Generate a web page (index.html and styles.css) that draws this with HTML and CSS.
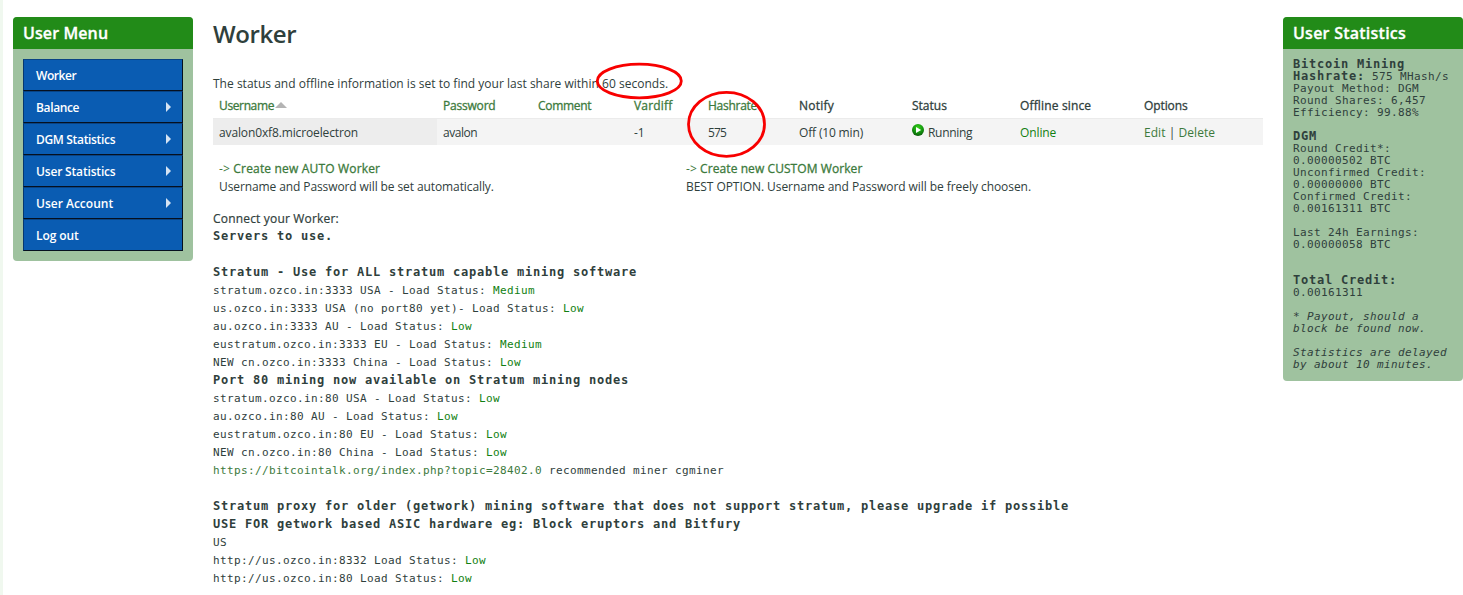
FILE: index.html
```html
<!DOCTYPE html>
<html lang="en">
<head>
<meta charset="utf-8">
<title>Worker</title>
<link rel="stylesheet" href="styles.css">
</head>
<body>
<div class="page">
  <aside class="panel">
    <h3 class="panel-title"><span class="t-menu">User Menu</span></h3>
    <ul class="menu">
      <li class="item"><span class="m1">Worker</span></li>
      <li class="item"><span class="m2">Balance</span><i class="arrow"></i></li>
      <li class="item"><span class="m3">DGM Statistics</span><i class="arrow"></i></li>
      <li class="item"><span class="m4">User Statistics</span><i class="arrow"></i></li>
      <li class="item"><span class="m5">User Account</span><i class="arrow"></i></li>
      <li class="item"><span class="m6">Log out</span></li>
    </ul>
  </aside>
  <main class="main">
    <h1 class="title"><span class="h">Worker</span></h1>
    <p class="line"><span class="s1">The status and offline information is set to find your last share within 60 seconds.</span></p>
    <div class="row head">
      <div><a class="c1">Username</a><i class="sort"></i></div>
      <div><a class="c2">Password</a></div>
      <div><a class="c3">Comment</a></div>
      <div><a class="c4">Vardiff</a></div>
      <div><a class="c5">Hashrate</a></div>
      <div><span class="c6">Notify</span></div>
      <div><span class="c7">Status</span></div>
      <div><span class="c8">Offline since</span></div>
      <div><span class="c9">Options</span></div>
    </div>
    <div class="row data">
      <div class="sorted"><span class="d1">avalon0xf8.microelectron</span></div>
      <div><span class="d2">avalon</span></div>
      <div></div>
      <div><span class="d4">-1</span></div>
      <div><span class="d5">575</span></div>
      <div><span class="d6">Off (10 min)</span></div>
      <div class="run"><svg class="play" viewBox="0 0 12 12"><defs><radialGradient id="g" cx=".5" cy=".3" r=".7"><stop offset="0" stop-color="#36d018"/><stop offset=".55" stop-color="#169b10"/><stop offset="1" stop-color="#0b5a0b"/></radialGradient></defs><circle cx="6" cy="6" r="6" fill="url(#g)"/><path d="M4 3l5.2 3L4 9z" fill="#fff"/></svg><span class="d7">Running</span></div>
      <div><span class="d8 ok">Online</span></div>
      <div><span class="d9"><a>Edit</a> | <a>Delete</a></span></div>
    </div>
    <div class="create">
      <div class="auto">
        <div><a class="e1"><span class="thin">-&gt; </span>Create new AUTO Worker</a></div>
        <div><span class="e2">Username and Password will be set automatically.</span></div>
      </div>
      <div>
        <div><a class="e3"><span class="thin">-&gt; </span>Create new CUSTOM Worker</a></div>
        <div><span class="e4">BEST OPTION. Username and Password will be freely choosen.</span></div>
      </div>
    </div>
    <div class="line"><span class="s2">Connect your Worker:</span></div>
<pre class="mono"><b>Servers to use.</b>

<b>Stratum - Use for ALL stratum capable mining software</b>
stratum.ozco.in:3333 USA - Load Status: <span class="ok">Medium</span>
us.ozco.in:3333 USA (no port80 yet)- Load Status: <span class="ok">Low</span>
au.ozco.in:3333 AU - Load Status: <span class="ok">Low</span>
eustratum.ozco.in:3333 EU - Load Status: <span class="ok">Medium</span>
NEW cn.ozco.in:3333 China - Load Status: <span class="ok">Low</span>
<b>Port 80 mining now available on Stratum mining nodes</b>
stratum.ozco.in:80 USA - Load Status: <span class="ok">Low</span>
au.ozco.in:80 AU - Load Status: <span class="ok">Low</span>
eustratum.ozco.in:80 EU - Load Status: <span class="ok">Low</span>
NEW cn.ozco.in:80 China - Load Status: <span class="ok">Low</span>
<a>https://bitcointalk.org/index.php?topic=28402.0</a> recommended miner cgminer

<b>Stratum proxy for older (getwork) mining software that does not support stratum, please upgrade if possible</b>
<b>USE FOR getwork based ASIC hardware eg: Block eruptors and Bitfury</b>
US
http://us.ozco.in:8332 Load Status: <span class="ok">Low</span>
http://us.ozco.in:80 Load Status: <span class="ok">Low</span></pre>
  </main>
  <aside class="panel">
    <h3 class="panel-title"><span class="t-stats">User Statistics</span></h3>
<pre class="mono stats"><b>Bitcoin Mining</b>
<b>Hashrate:</b> 575 MHash/s
Payout Method: DGM
Round Shares: 6,457
Efficiency: 99.88%

<b>DGM</b>
Round Credit*:
0.00000502 BTC
Unconfirmed Credit:
0.00000000 BTC
Confirmed Credit:
0.00161311 BTC

Last 24h Earnings:
0.00000058 BTC


<b>Total Credit:</b>
0.00161311

<em>* Payout, should a
block be found now.

Statistics are delayed
by about 10 minutes.</em></pre>
  </aside>
</div>
<svg class="marks" viewBox="0 0 1463 595"><ellipse cx="639.3" cy="81" rx="42" ry="16.8"/><ellipse cx="726.5" cy="124.3" rx="38" ry="32"/></svg>
</body>
</html>
```
FILE: styles.css
```css
* { box-sizing: border-box; }
body { margin: 0; height: 595px; overflow: hidden; background: #fff; color: #2f403c; border-left: 3px solid #f0f8ef; font: 12px/18px "Open Sans", "Noto Sans", sans-serif; }
a { color: #3c7a3c; }
.page { display: flex; align-items: flex-start; padding: 17px 0 0 10px; }
.panel { width: 180px; flex: none; background: #9fc29f; border-radius: 4px; overflow: hidden; }
.panel-title { margin: 0; height: 32px; padding-left: 10px; background: #228b18; color: #fff; font-size: 16px; line-height: 32px; font-weight: 600; white-space: nowrap; -webkit-text-stroke: .3px; }
.menu { list-style: none; margin: 0; padding: 10px; }
.item { display: flex; justify-content: space-between; align-items: center; height: 32px; padding: 0 11px 0 12px; background: #0a5cb2; border: 1px solid #06101f; border-top-color: #084384; border-left-color: #06386f; color: #fff; font-weight: 600; white-space: nowrap; }
.item span { padding-top: 1px; }
.arrow { border-left: 5px solid #d5e3f3; border-top: 5px solid transparent; border-bottom: 5px solid transparent; }
.main { width: 1050px; margin: 0 20px; flex: none; white-space: nowrap; }
.title { margin: 0 0 24px; font-size: 24px; line-height: 34px; font-weight: 600; }
.line { margin: 0; height: 18px; }
.row { display: grid; grid-template-columns: 224px 95px 96px 74px 91px 113px 108px 124px 125px; }
.row > div { padding-left: 6px; }
.head { height: 25px; line-height: 25px; -webkit-text-stroke: .3px; }
.data { height: 27px; line-height: 25px; background: #f4f4f4; border-top: 1px solid #ebebeb; }
.data > div { padding-top: 1px; }
.sorted { background: #ededed; }
.sort { display: inline-block; border: 6px solid transparent; border-top: 0; border-bottom-color: #b4b4b4; margin: 0 0 2px 1px; }
.run { display: flex; }
.play { width: 12px; height: 12px; margin: 4px 4px 0 0; }
.create { display: flex; padding: 15px 0 14px 6px; }
.auto { width: 467px; }
.create a { -webkit-text-stroke: .3px; }
.thin { -webkit-text-stroke: 0; }
.ok { color: #117f11; }
.mono { margin: 0; font: 11px/18px "DejaVu Sans Mono", monospace; letter-spacing: .378px; }
.mono b { font-size: 12px; line-height: 1px; letter-spacing: .776px; }
.stats { padding: 10px 0 10px 10px; line-height: 12px; }
.marks { position: absolute; left: 0; top: 0; width: 1463px; height: 595px; fill: none; stroke: #f80000; stroke-width: 2.8; pointer-events: none; }

/* Tracking per label */
.t-menu { letter-spacing: .1px; }
.t-stats { letter-spacing: .24px; }
.m1 { letter-spacing: -.43px; }
.m2 { letter-spacing: -.36px; }
.m3 { letter-spacing: -.33px; }
.m4 { letter-spacing: -.17px; }
.m6 { letter-spacing: -.1px; }
.h { letter-spacing: -.42px; }
.s1 { letter-spacing: .015px; }
.c1 { letter-spacing: -.37px; }
.c2 { letter-spacing: -.2px; }
.c3 { letter-spacing: -.3px; }
.c4 { letter-spacing: .2px; }
.c5 { letter-spacing: -.27px; }
.c6 { letter-spacing: .25px; }
.c8 { letter-spacing: .15px; }
.c9 { letter-spacing: -.1px; }
.d1 { letter-spacing: -.13px; }
.d2 { letter-spacing: -.45px; }
.d5 { letter-spacing: -.8px; }
.d6 { letter-spacing: -.16px; }
.d7 { letter-spacing: -.3px; }
.d8 { letter-spacing: -.1px; }
.d9 { letter-spacing: .05px; }
.e1 { letter-spacing: .17px; }
.e2 { letter-spacing: -.1px; }
.e3 { letter-spacing: .08px; }
.e4 { letter-spacing: -.06px; }
.s2 { letter-spacing: .18px; -webkit-text-stroke: .2px; }
```
